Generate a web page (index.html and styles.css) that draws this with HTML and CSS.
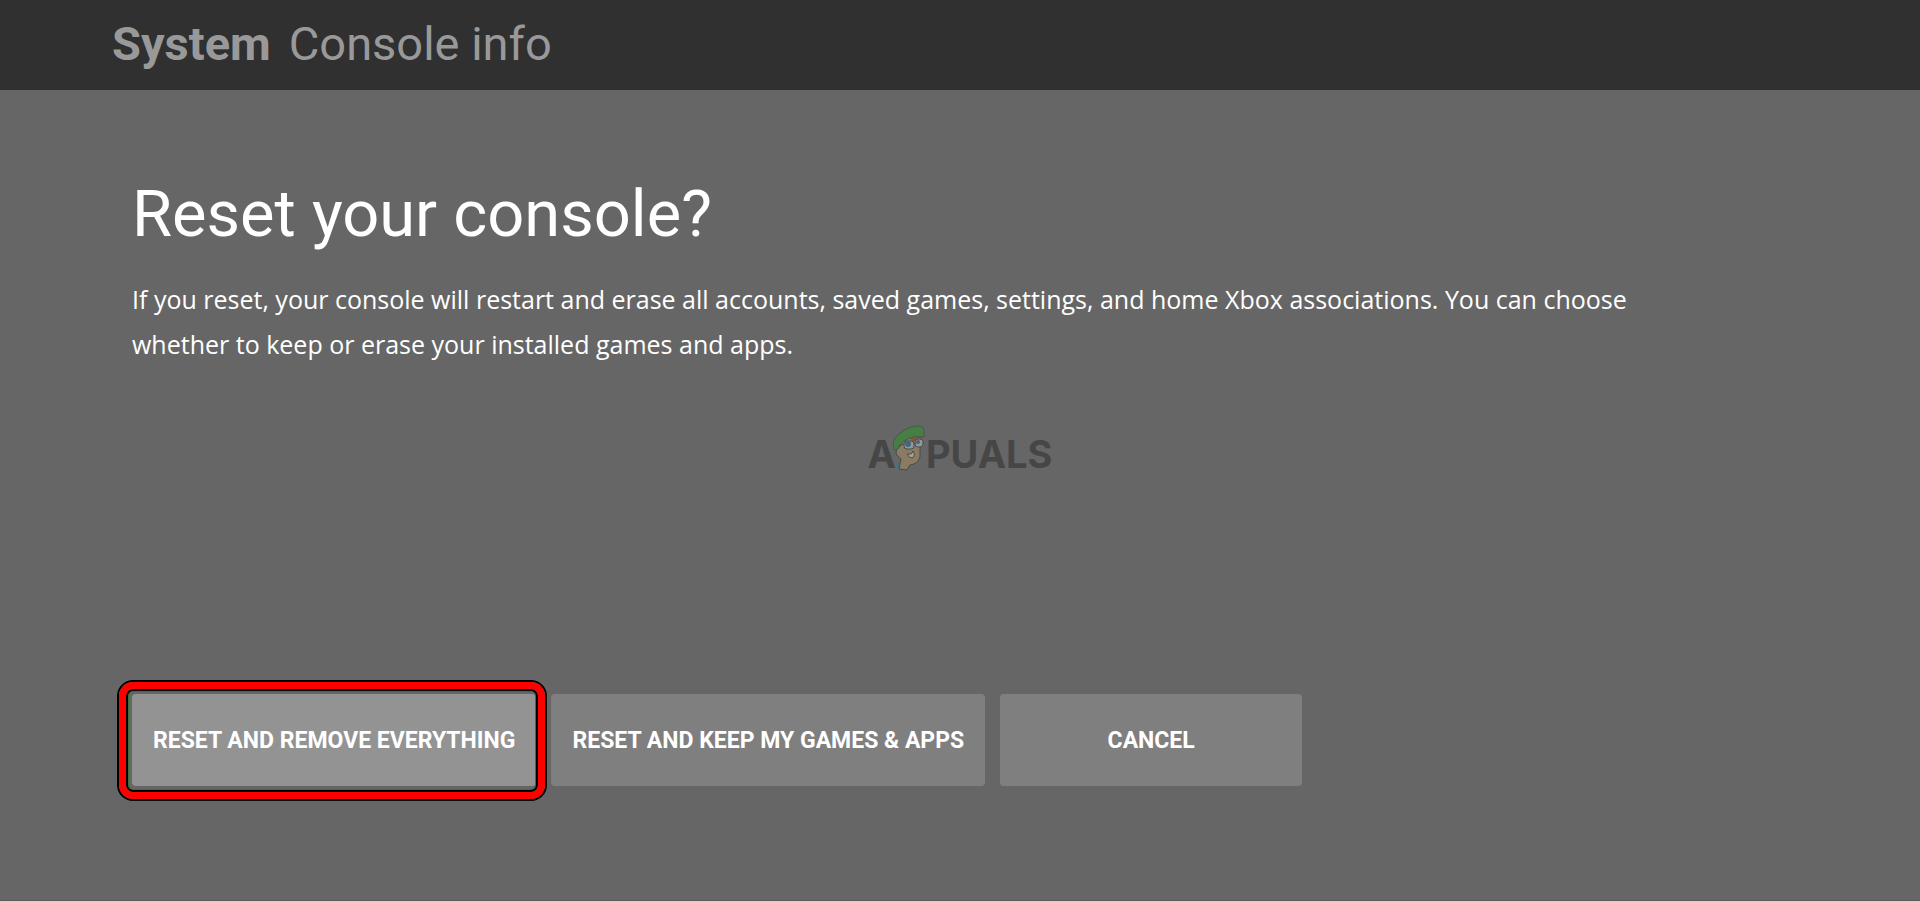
FILE: index.html
```
<!DOCTYPE html>
<html lang="en">
<head>
  <meta charset="UTF-8">
  <meta name="viewport" content="width=device-width, initial-scale=1">
  <title>System - Console info</title>
  <link rel="stylesheet" href="styles.css">
</head>
<body>

  <header class="topbar">
    <strong>System</strong>
    <span>Console info</span>
  </header>

  <main class="reset">
    <h1>Reset your console?</h1>
    <p class="message">If you reset, your console will restart and erase all accounts, saved games, settings, and home Xbox associations. You can choose whether to keep or erase your installed games and apps.</p>

    <!-- brand mark -->
    <div class="brand">
      <span>A</span>
      <svg class="face" viewBox="0 0 36 48" aria-hidden="true">
        <path d="M4 47 L7 40 L15 42 L20 47 Z" fill="#4a7080"/>
        <path d="M7 22 L6 31 L11 36 L9 46 L17 47 L20 42 Q28 41 30 34 L30 24 L31 12 L22 12 Z" fill="#8a7b63" stroke="#4b4a45" stroke-width="1"/>
        <path d="M20 14 L31 9 L31 16 L22 19 Z" fill="#80583f"/>
        <path d="M4 27 Q1 17 9 11 Q19 2 31 3 Q35 5 34 14 Q25 12 18 16 Q12 18 10 23 Q9 27 4 27 Z" fill="#467e45" stroke="#47594a" stroke-width="1"/>
        <rect x="14" y="18" width="10" height="8" rx="3" fill="#929899" stroke="#4b4c4e" stroke-width="1"/>
        <rect x="25" y="16" width="8" height="8" rx="3" fill="#929899" stroke="#4b4c4e" stroke-width="1"/>
        <circle cx="18" cy="21" r="3" fill="#40677d"/>
        <circle cx="28" cy="19" r="2" fill="#40677d"/>
        <path d="M8 23 L14 21 M24 21 L26 20" stroke="#4b4c4e" stroke-width="1"/>
        <path d="M17 31 Q22 32 23 28 Q26 33 22 35 Q19 35 17 31 Z" fill="#a5a29d" stroke="#51483f" stroke-width="1"/>
      </svg>
      <span>PUALS</span>
    </div>

    <div class="actions">
      <button type="button" class="btn selected">RESET AND REMOVE EVERYTHING</button>
      <button type="button" class="btn">RESET AND KEEP MY GAMES &amp; APPS</button>
      <button type="button" class="btn cancel">CANCEL</button>
    </div>
  </main>

</body>
</html>
```
FILE: styles.css
```
* {
  margin: 0; padding: 0; box-sizing: border-box;
}

body {
  min-height: 100vh;
  display: flex;
  flex-direction: column;
  font-family: Roboto, "Liberation Sans", sans-serif;
  background: #666;
  color: #fff;
}

.topbar {
  display: flex;
  align-items: center;
  gap: 18px;
  height: 90px;
  padding: 0 112px 4px;
  background: #303030;
  color: #999;
  font-size: 47px;
}

.reset {
  flex: 1;
  display: flex;
  flex-direction: column;
  padding: 84px 132px 114px;
  border-bottom: 1px solid #5c5a5c;
}

h1 {
  font-size: 65px;
  font-weight: 400;
  line-height: 80px;
}

.message {
  max-width: 1500px;
  margin-top: 23px;
  font-family: "Open Sans", "Noto Sans", sans-serif;
  font-size: 25px;
  line-height: 45px;
}

.brand {
  display: flex;
  align-items: flex-end;
  align-self: center;
  margin-top: 56px;
  color: #464646;
  font-family: Inter, sans-serif;
  font-size: 38px;
  font-weight: 700;
  line-height: 34px;
}

.face {
  width: 36px;
  height: 48px;
  margin-left: -6px;
}

.actions {
  display: flex;
  gap: 15px;
  margin-top: auto;
}

.btn {
  height: 92px;
  padding: 0 21px;
  border: none;
  border-radius: 4px;
  background: #7f7f7f;
  color: #fff;
  font-family: inherit;
  font-size: 23px;
  font-weight: 700;
  cursor: pointer;
}

.btn.cancel {
  width: 302px;
}

/* focus frame around the chosen action */
.btn.selected {
  position: relative;
  background: #939393;
}

.btn.selected::after {
  content: "";
  position: absolute;
  inset: -12px -9px -13px -13px;
  border: 7px solid #f00;
  border-radius: 14px;
  box-shadow: 0 0 0 2px #000, inset 0 0 0 2px #000, inset 0 0 0 3px #3b7037;
}
```
